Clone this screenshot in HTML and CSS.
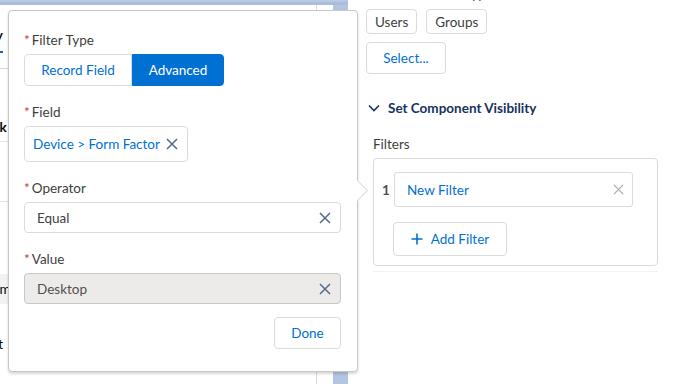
FILE: index.html
```html
<!DOCTYPE html>
<html lang="en">
<head>
    <meta charset="UTF-8">
    <title>Component Visibility Filter</title>
    <link rel="stylesheet" href="styles.css">
</head>
<body>
    <!-- Page behind the popover -->
    <div class="canvas">
        <div class="canvas-top"></div>
        <div class="canvas-body">
            <div class="canvas-panel">
                <div class="tab-row"><span class="tab">Property</span></div>
                <div class="row row-tall"><span class="row-link">Task</span></div>
                <div class="row"></div>
                <div class="row row-grey"><span>Form</span></div>
                <div class="row row-last"><span>Edit</span></div>
            </div>
            <div class="canvas-scroll"></div>
        </div>
    </div>

    <!-- Properties panel -->
    <div class="props">
        <div class="cut-label">Audience Type</div>
        <div class="chip-row">
            <button class="btn btn-plain">Users</button>
            <button class="btn btn-plain">Groups</button>
        </div>
        <button class="btn btn-select">Select...</button>

        <div class="section-title">
            <svg class="chevron" viewBox="0 0 12 8" width="12" height="8"><path d="M1 1.5 L6 6.5 L11 1.5" fill="none" stroke="#16325c" stroke-width="1.6"/></svg>
            Set Component Visibility
        </div>

        <div class="filters-label">Filters</div>
        <div class="filters-box">
            <div class="filter-row">
                <span class="filter-num">1</span>
                <div class="filter-pill">
                    <span>New Filter</span>
                    <svg class="x-icon x-light" viewBox="0 0 12 12" width="11" height="11"><path d="M1 1 L11 11 M11 1 L1 11" stroke="currentColor" stroke-width="1.4"/></svg>
                </div>
            </div>
            <button class="btn btn-add">
                <svg viewBox="0 0 12 12" width="12" height="12"><path d="M6 0.5 V11.5 M0.5 6 H11.5" stroke="#0070d2" stroke-width="1.6"/></svg>
                Add Filter
            </button>
        </div>
        <div class="props-divider"></div>
    </div>

    <!-- Filter popover -->
    <div class="popover">
        <span class="nubbin"></span>

        <div class="field">
            <label class="field-label"><abbr>*</abbr>Filter Type</label>
            <div class="btn-group">
                <button class="seg">Record Field</button>
                <button class="seg seg-on">Advanced</button>
            </div>
        </div>

        <div class="field">
            <label class="field-label"><abbr>*</abbr>Field</label>
            <div class="pill-box">
                <span class="pill-text">Device &gt; Form Factor</span>
                <svg class="x-icon" viewBox="0 0 12 12" width="12" height="12"><path d="M1 1 L11 11 M11 1 L1 11" stroke="currentColor" stroke-width="1.5"/></svg>
            </div>
        </div>

        <div class="field">
            <label class="field-label"><abbr>*</abbr>Operator</label>
            <div class="input">
                <span>Equal</span>
                <svg class="x-icon" viewBox="0 0 12 12" width="12" height="12"><path d="M1 1 L11 11 M11 1 L1 11" stroke="currentColor" stroke-width="1.5"/></svg>
            </div>
        </div>

        <div class="field">
            <label class="field-label"><abbr>*</abbr>Value</label>
            <div class="input input-disabled">
                <span>Desktop</span>
                <svg class="x-icon" viewBox="0 0 12 12" width="12" height="12"><path d="M1 1 L11 11 M11 1 L1 11" stroke="currentColor" stroke-width="1.5"/></svg>
            </div>
        </div>

        <div class="popover-foot">
            <button class="btn btn-done">Done</button>
        </div>
    </div>
</body>
</html>
```

FILE: styles.css
```css
/* Base */
body {
    margin: 0;
    width: 674px;
    height: 384px;
    overflow: hidden;
    display: flex;
    position: relative;
    font-family: Lato, "Noto Sans", Arial, sans-serif;
    font-size: 13.5px;
    color: #3e3e3c;
    background-color: #ffffff;
    white-space: nowrap;
}

button {
    font-family: inherit;
    font-size: 13.5px;
    cursor: pointer;
}

/* Builder canvas behind the popover */
.canvas {
    width: 348px;
    display: flex;
    flex-direction: column;
}

.canvas-top {
    height: 7px;
    background-color: #b8cae3;
    border-bottom: 3px solid #a9bedb;
}

.canvas-body {
    flex: 1;
    display: flex;
}

.canvas-panel {
    flex: 1;
    border-right: 1px solid #dddbda;
    margin-right: 16px;
}

.canvas-scroll {
    width: 15px;
    background-color: #b3c6e0;
}

.tab-row {
    height: 64px;
    box-sizing: border-box;
    padding-top: 21px;
    border-bottom: 1px solid #dddbda;
}

.tab {
    display: inline-block;
    line-height: 18px;
    font-weight: bold;
    color: #080707;
    padding-bottom: 7px;
    margin-left: -50px;
    border-bottom: 2px solid #0070d2;
}

.row {
    height: 60px;
    box-sizing: border-box;
    border-bottom: 1px solid #e5e5e5;
    display: flex;
    align-items: center;
}

.row-tall {
    height: 73px;
    align-items: flex-end;
    padding-bottom: 6px;
}

.row-link {
    color: #0070d2;
    margin-left: -22px;
    font-weight: bold;
}

.row-grey {
    background-color: #f3f2f2;
    margin-top: 72px;
    height: 30px;
    border-bottom: none;
}

.row-last {
    border-bottom: none;
    height: 80px;
    align-items: flex-start;
    padding-top: 32px;
}

.row span {
    margin-left: -20px;
    color: #080707;
}

/* Properties panel */
.props {
    flex: 1;
    padding-left: 18px;
    padding-right: 16px;
}

.cut-label {
    margin-top: -14px;
    height: 23px;
    padding-left: 40px;
    color: #3e3e3c;
}

.chip-row {
    display: flex;
    gap: 9px;
}

.btn {
    background-color: #ffffff;
    border: 1px solid #dddbda;
    border-radius: 4px;
    color: #0070d2;
    padding: 0 14px;
}

.btn-plain {
    height: 25px;
    padding: 0 8px;
    color: #3e3e3c;
}

.btn-select {
    margin-top: 8px;
    height: 32px;
    width: 80px;
    padding: 0;
}

.section-title {
    margin-top: 26px;
    display: flex;
    align-items: center;
    gap: 8px;
    font-weight: bold;
    color: #16325c;
    padding-left: 2px;
}

.filters-label {
    margin-top: 20px;
    padding-left: 7px;
    color: #3e3e3c;
}

.filters-box {
    margin: 6px 0 0 7px;
    height: 108px;
    border: 1px solid #dddbda;
    border-radius: 4px;
    box-sizing: border-box;
    padding: 13px 24px 0 8px;
}

.filter-row {
    display: flex;
    align-items: center;
    gap: 6px;
}

.filter-num {
    font-weight: bold;
    color: #514f4d;
    width: 6px;
}

.filter-pill {
    flex: 1;
    height: 35px;
    border: 1px solid #dddbda;
    border-radius: 3px;
    box-sizing: border-box;
    display: flex;
    align-items: center;
    justify-content: space-between;
    padding: 0 8px 0 12px;
    color: #0070d2;
}

.btn-add {
    margin: 15px 0 0 11px;
    height: 34px;
    width: 114px;
    padding: 0;
    display: flex;
    align-items: center;
    justify-content: center;
    gap: 8px;
}

.props-divider {
    margin: 5px 0 0 7px;
    border-top: 1px solid #f3f2f2;
}

.x-icon {
    color: #54698d;
}

.x-light {
    color: #b0adab;
}

/* Popover */
.popover {
    position: absolute;
    left: 8px;
    top: 10px;
    width: 350px;
    height: 362px;
    box-sizing: border-box;
    background-color: #ffffff;
    border: 1px solid #c9c7c5;
    border-radius: 4px;
    box-shadow: 0 2px 3px rgba(0, 0, 0, 0.16);
    padding: 20px 16px 0 15px;
    display: flex;
    flex-direction: column;
}

.nubbin {
    position: absolute;
    right: -8px;
    top: 172px;
    width: 14px;
    height: 14px;
    background-color: #ffffff;
    border-top: 1px solid #dddbda;
    border-right: 1px solid #dddbda;
    transform: rotate(45deg);
}

.field {
    margin-bottom: 17px;
}

.field-label {
    display: block;
    line-height: 18px;
    margin-bottom: 5px;
    color: #3e3e3c;
}

.field-label abbr {
    color: #c23934;
    text-decoration: none;
    margin-right: 2px;
}

.btn-group {
    display: flex;
}

.seg {
    height: 32px;
    border: 1px solid #dddbda;
    background-color: #ffffff;
    color: #0070d2;
    padding: 0;
    border-radius: 4px 0 0 4px;
    width: 108px;
}

.seg-on {
    background-color: #0070d2;
    border-color: #0070d2;
    color: #ffffff;
    border-radius: 0 4px 4px 0;
    width: 92px;
}

.pill-box {
    width: 164px;
    height: 36px;
    box-sizing: border-box;
    border: 1px solid #dddbda;
    border-radius: 4px;
    display: flex;
    align-items: center;
    justify-content: space-between;
    padding: 0 9px 0 8px;
}

.pill-text {
    color: #0070d2;
}

.input {
    height: 31px;
    box-sizing: border-box;
    border: 1px solid #dddbda;
    border-radius: 4px;
    display: flex;
    align-items: center;
    justify-content: space-between;
    padding: 0 9px 0 12px;
    color: #3e3e3c;
}

.input-disabled {
    background-color: #ecebea;
    border-color: #c9c7c5;
    color: #514f4d;
}

.popover-foot {
    display: flex;
    justify-content: flex-end;
    margin-top: -4px;
}

.btn-done {
    height: 32px;
    width: 67px;
    padding: 0;
}
```
